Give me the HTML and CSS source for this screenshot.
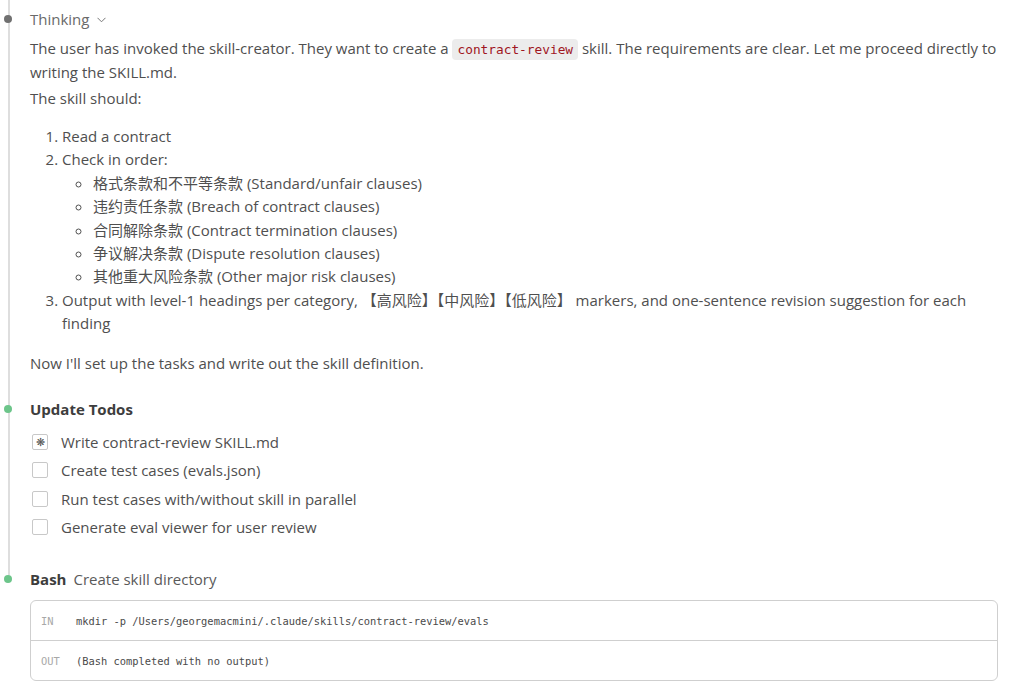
FILE: index.html
```html
<!DOCTYPE html>
<html lang="en">
<head>
    <meta charset="UTF-8">
    <title>Skill creator transcript</title>
    <link rel="stylesheet" href="styles.css">
</head>
<body>
    <div class="timeline">
        <!-- Thinking block -->
        <div class="step step-thinking">
            <span class="dot dot-gray"></span>
            <div class="step-head thinking-head">Thinking
                <svg class="chev" width="9" height="6" viewBox="0 0 9 6"><path d="M0.5 0.8 L4.5 4.8 L8.5 0.8" fill="none" stroke="#777" stroke-width="1"/></svg>
            </div>
            <p class="para-first">The user has invoked the skill-creator. They want to create a <code class="chip">contract-review</code> skill. The requirements are clear. Let me proceed directly to writing the SKILL.md.</p>
            <p class="para-tight">The skill should:</p>
            <ol class="steps-list">
                <li>Read a contract</li>
                <li>Check in order:
                    <ul class="sub-list">
                        <li>格式条款和不平等条款 (Standard/unfair clauses)</li>
                        <li>违约责任条款 (Breach of contract clauses)</li>
                        <li>合同解除条款 (Contract termination clauses)</li>
                        <li>争议解决条款 (Dispute resolution clauses)</li>
                        <li>其他重大风险条款 (Other major risk clauses)</li>
                    </ul>
                </li>
                <li>Output with level-1 headings per category, 【高风险】【中风险】【低风险】 markers, and one-sentence revision suggestion for each finding</li>
            </ol>
            <p class="para-last">Now I'll set up the tasks and write out the skill definition.</p>
        </div>

        <!-- Todos -->
        <div class="step step-todos">
            <span class="dot dot-green"></span>
            <div class="step-head"><b>Update Todos</b></div>
            <ul class="todos">
                <li><span class="box active">&#10059;</span>Write contract-review SKILL.md</li>
                <li><span class="box"></span>Create test cases (evals.json)</li>
                <li><span class="box"></span>Run test cases with/without skill in parallel</li>
                <li><span class="box"></span>Generate eval viewer for user review</li>
            </ul>
        </div>

        <!-- Bash -->
        <div class="step step-bash">
            <span class="dot dot-green"></span>
            <div class="step-head"><b>Bash</b><span class="head-desc">Create skill directory</span></div>
            <div class="io-box">
                <div class="io-row"><span class="io-label">IN</span><span class="io-text">mkdir -p /Users/georgemacmini/.claude/skills/contract-review/evals</span></div>
                <div class="io-row"><span class="io-label">OUT</span><span class="io-text">(Bash completed with no output)</span></div>
            </div>
        </div>
    </div>
</body>
</html>
```

FILE: styles.css
```css
body {
    margin: 0;
    background: #ffffff;
    color: #4f4f4f;
    font-family: 'Open Sans', 'Noto Sans', 'Noto Sans CJK SC', sans-serif;
    font-size: 15px;
    line-height: 24px;
}

.timeline {
    padding: 0 19px 0 30px;
}

.step {
    position: relative;
}

/* the vertical rail of the timeline */
.step::before {
    content: '';
    position: absolute;
    left: -22px;
    top: 0;
    bottom: 0;
    width: 2px;
    background: #dedede;
}

.step-bash::before {
    bottom: auto;
    height: 8px;
}

.dot {
    position: absolute;
    left: -26px;
    width: 8px;
    height: 8px;
    border-radius: 50%;
    z-index: 1;
}

.dot-gray {
    background: #707070;
}

.dot-green {
    background: #6cc58a;
}

.step-thinking {
    padding-top: 7px;
    padding-bottom: 22px;
}

.step-thinking .dot {
    top: 15px;
}

.step-head {
    line-height: 24px;
    color: #4a4a4a;
}

.step-head b {
    font-weight: 700;
    color: #3d3d3d;
}

.thinking-head {
    color: #6a6a6a;
}

.chev {
    margin-left: 4px;
    vertical-align: 2px;
}

p {
    margin: 0;
}

.para-first {
    margin-top: 5px;
}

.para-tight {
    margin-top: 2px;
}

.para-last {
    margin-top: 15px;
}

.chip {
    font-family: 'DejaVu Sans Mono', 'Liberation Mono', monospace;
    font-size: 12.8px;
    line-height: 1;
    background: #ececec;
    color: #a0161f;
    padding: 3px 5px;
    border-radius: 4px;
}

.steps-list {
    margin: 15px 0 0;
    padding-left: 32px;
    line-height: 23.4px;
}

.sub-list {
    margin: 0;
    padding-left: 31px;
    list-style: circle;
}

.step-todos {
    padding-bottom: 26px;
}

.step-todos .dot {
    top: 8px;
}

.todos {
    list-style: none;
    margin: 7px 0 0;
    padding: 0;
}

.todos li {
    display: flex;
    align-items: center;
    height: 28.4px;
}

.box {
    width: 14px;
    height: 14px;
    border: 1px solid #c8c8c8;
    border-radius: 2px;
    margin: 0 13px 0 2px;
    display: flex;
    align-items: center;
    justify-content: center;
    font-size: 11px;
    line-height: 1;
    color: #555;
}

.step-bash .dot {
    top: 8px;
}

.head-desc {
    margin-left: 7px;
    color: #5a5a5a;
}

.io-box {
    margin-top: 9px;
    border: 1px solid #cfcfcf;
    border-radius: 6px;
}

.io-row {
    display: flex;
    align-items: center;
    height: 39px;
    padding-left: 10px;
    font-family: 'DejaVu Sans Mono', 'Liberation Mono', monospace;
    font-size: 10.4px;
}

.io-row + .io-row {
    border-top: 1px solid #cfcfcf;
}

.io-label {
    width: 35px;
    color: #a8a8a8;
}

.io-text {
    color: #4a4a4a;
}
```
